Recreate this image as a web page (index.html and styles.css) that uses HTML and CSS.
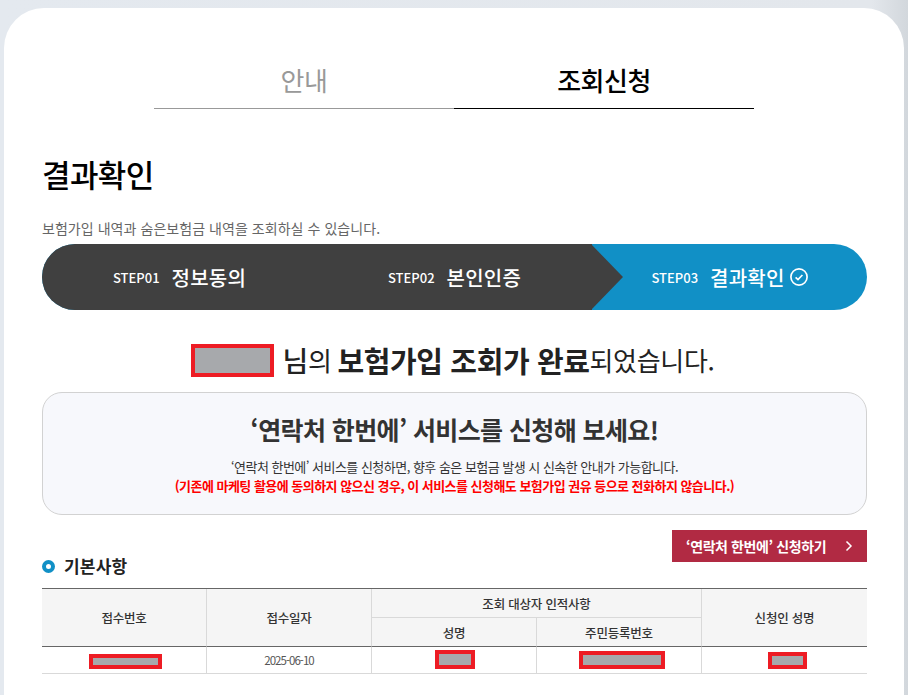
FILE: index.html
```html
<!DOCTYPE html>
<html lang="ko">
<head>
<meta charset="utf-8">
<title>결과확인</title>
<link rel="stylesheet" href="styles.css">
</head>
<body>
<main class="card">
  <nav class="tabs">
    <a class="tab">안내</a>
    <a class="tab tab-active">조회신청</a>
  </nav>
  <h1 class="page-title">결과확인</h1>
  <p class="page-desc">보험가입 내역과 숨은보험금 내역을 조회하실 수 있습니다.</p>
  <ol class="steps">
    <li class="step step-dark"><span class="step-no">STEP01</span><span class="step-name">정보동의</span></li>
    <li class="step step-dark step-arrow"><span class="step-no">STEP02</span><span class="step-name">본인인증</span></li>
    <li class="step"><span class="step-no">STEP03</span><span class="step-name">결과확인</span>
      <svg class="step-check" viewBox="0 0 18 18" width="18" height="18" aria-hidden="true"><circle cx="9" cy="9" r="8.100" fill="none" stroke="#fff" stroke-width="1.700"/><path d="M5.600 9.300l2.400 2.300 4.400-4.600" fill="none" stroke="#fff" stroke-width="1.700"/></svg>
    </li>
  </ol>
  <p class="done"><span class="mask mask-name"></span><span class="done-nim">님</span><span class="done-ui">의 </span><strong>보험가입 조회가 완료</strong>되었습니다.</p>
  <section class="notice">
    <h2 class="notice-title">‘연락처 한번에’ 서비스를 신청해 보세요!</h2>
    <p class="notice-text">‘연락처 한번에’ 서비스를 신청하면, 향후 숨은 보험금 발생 시 신속한 안내가 가능합니다.</p>
    <p class="notice-warn">(기존에 마케팅 활용에 동의하지 않으신 경우, 이 서비스를 신청해도 보험가입 권유 등으로 전화하지 않습니다.)</p>
  </section>
  <div class="section-head">
    <h3 class="section-title">기본사항</h3>
    <a class="apply-btn">‘연락처 한번에’ 신청하기
      <svg class="apply-chevron" viewBox="0 0 8 12" width="8" height="12" aria-hidden="true"><path d="M1.500 1.500L6 6l-4.500 4.500" fill="none" stroke="#fff" stroke-width="1.500"/></svg>
    </a>
  </div>
  <table class="info">
    <thead>
      <tr>
        <th rowspan="2" class="cell-head-main">접수번호</th>
        <th rowspan="2" class="cell-head-main">접수일자</th>
        <th colspan="2">조회 대상자 인적사항</th>
        <th rowspan="2" class="cell-head-main cell-end">신청인 성명</th>
      </tr>
      <tr>
        <th class="cell-head-main">성명</th>
        <th class="cell-head-main">주민등록번호</th>
      </tr>
    </thead>
    <tbody>
      <tr>
        <td><span class="mask mask-no"></span></td>
        <td>2025-06-10</td>
        <td><span class="mask mask-td-name"></span></td>
        <td><span class="mask mask-rrn"></span></td>
        <td class="cell-end"><span class="mask mask-applicant"></span></td>
      </tr>
    </tbody>
  </table>
</main>
</body>
</html>
```
FILE: styles.css
```css
* { box-sizing: border-box; }
html, body { height: 100%; margin: 0; overflow: hidden; }
body {
  padding: 8px 4px 0;
  background: linear-gradient(to right, #e4e9ef, #e3e7ec 96%, #d2d7dc 100%);
  font-family: "Noto Sans CJK KR", "Noto Sans", sans-serif;
  color: #222;
}
.card {
  min-height: 720px;
  background: #fff;
  border-radius: 40px 40px 0 0;
  padding: 36px 37px 0 38px;
}
.tabs { display: flex; width: 600px; margin: 0 0 0 112px; }
.tab {
  flex: 1;
  height: 65px;
  padding-top: 12px;
  text-align: center;
  font-size: 26px;
  line-height: 48px;
  letter-spacing: -0.5px;
  color: #999;
  border-bottom: 1px solid #999;
}
.tab-active { color: #000; font-weight: 500; border-bottom-color: #000; }
.page-title {
  margin: 43px 0 0;
  font-size: 31px;
  line-height: 44px;
  font-weight: 500;
  letter-spacing: -0.6px;
  color: #000;
}
.page-desc {
  margin: 22px 0 0;
  font-size: 14px;
  line-height: 20px;
  letter-spacing: 0.05px;
  color: #666;
}
.steps {
  display: grid;
  grid-template-columns: repeat(3, 275px);
  height: 66px;
  margin: 6px 0 0;
  padding: 0;
  list-style: none;
  background: #1190c6;
  border-radius: 33px;
  overflow: hidden;
  color: #fff;
}
.step { display: flex; align-items: center; justify-content: center; position: relative; }
.step-dark { background: #404040; }
.step-arrow::after {
  content: "";
  position: absolute;
  top: 0;
  left: calc(100% - 1px);
  width: 32px;
  height: 100%;
  background: #404040;
  clip-path: polygon(0 0, 100% 50%, 0 100%);
}
.step-no { font-size: 13px; font-weight: 500; margin-right: 12px; }
.step-name { font-size: 20px; font-weight: 500; letter-spacing: 0.2px; }
.step-check { margin-left: 5px; }
.done {
  margin: 30px 0 0;
  height: 40px;
  padding-right: 3px;
  display: flex;
  align-items: center;
  justify-content: center;
  font-size: 26px;
  line-height: 40px;
  white-space: pre;
  color: #222;
  letter-spacing: -0.3px;
}
.done strong { font-size: 29px; font-weight: 700; letter-spacing: -0.4px; }
.done-nim { font-size: 28px; font-weight: 500; }
.done-ui { letter-spacing: -0.8px; }
.mask {
  display: inline-block;
  background: #a7a9ac;
  border: 4px solid #ed1c24;
  vertical-align: middle;
}
.mask-name { width: 83px; height: 33px; margin-right: 8px; }
.mask-no { width: 73px; height: 15px; margin-left: 3px; }
.mask-td-name { width: 40px; height: 19px; margin-left: 1px; margin-bottom: 2px; }
.mask-rrn { width: 86px; height: 18px; margin-left: 6px; }
.mask-applicant { width: 39px; height: 17px; margin-left: 6px; }
.notice {
  height: 123px;
  margin-top: 12px;
  padding-top: 16px;
  text-align: center;
  background: #f7f8fc;
  border: 1px solid #d2d2d2;
  border-radius: 20px;
}
.notice-title {
  margin: 0;
  font-size: 25px;
  line-height: 40px;
  font-weight: 700;
  letter-spacing: -0.6px;
  color: #333;
}
.notice-text {
  margin: 8px 0 0;
  font-size: 13px;
  line-height: 19px;
  letter-spacing: -0.52px;
  color: #333;
}
.notice-warn {
  margin: 0;
  font-size: 13px;
  line-height: 19px;
  font-weight: 700;
  letter-spacing: -0.53px;
  color: #f00;
}
.section-head {
  display: flex;
  justify-content: space-between;
  align-items: flex-start;
  height: 58px;
  margin-top: 15px;
}
.section-title {
  display: flex;
  align-items: center;
  gap: 9px;
  margin: 24px 0 0;
  font-size: 17px;
  line-height: 24px;
  font-weight: 700;
  letter-spacing: 0.2px;
  color: #222;
}
.section-title::before {
  content: "";
  box-sizing: border-box;
  width: 13px;
  height: 13px;
  border: 4px solid #1190c6;
  border-radius: 50%;
}
.apply-btn {
  display: flex;
  align-items: center;
  justify-content: space-between;
  width: 195px;
  height: 32px;
  padding: 0 14px;
  background: #b12a43;
  color: #fff;
  font-size: 14px;
  font-weight: 700;
  letter-spacing: -0.4px;
}
.info {
  width: 825px;
  table-layout: fixed;
  border-collapse: separate;
  border-spacing: 0;
  border-top: 1px solid #666;
  font-size: 12px;
}
.info th {
  height: 29px;
  padding: 0;
  font-weight: 500;
  font-size: 12.500px;
  letter-spacing: -0.2px;
  color: #333;
  background: #f5f5f5;
  border-right: 1px solid #d9d9d9;
  border-bottom: 1px solid #d9d9d9;
}
.info .cell-head-main { border-bottom-color: #666; }
.info td {
  height: 27px;
  padding: 0;
  text-align: center;
  font-size: 11.500px;
  letter-spacing: -0.95px;
  color: #555;
  border-right: 1px solid #d9d9d9;
  border-bottom: 1px solid #d9d9d9;
}
.info .cell-end { border-right: 0; }
```
